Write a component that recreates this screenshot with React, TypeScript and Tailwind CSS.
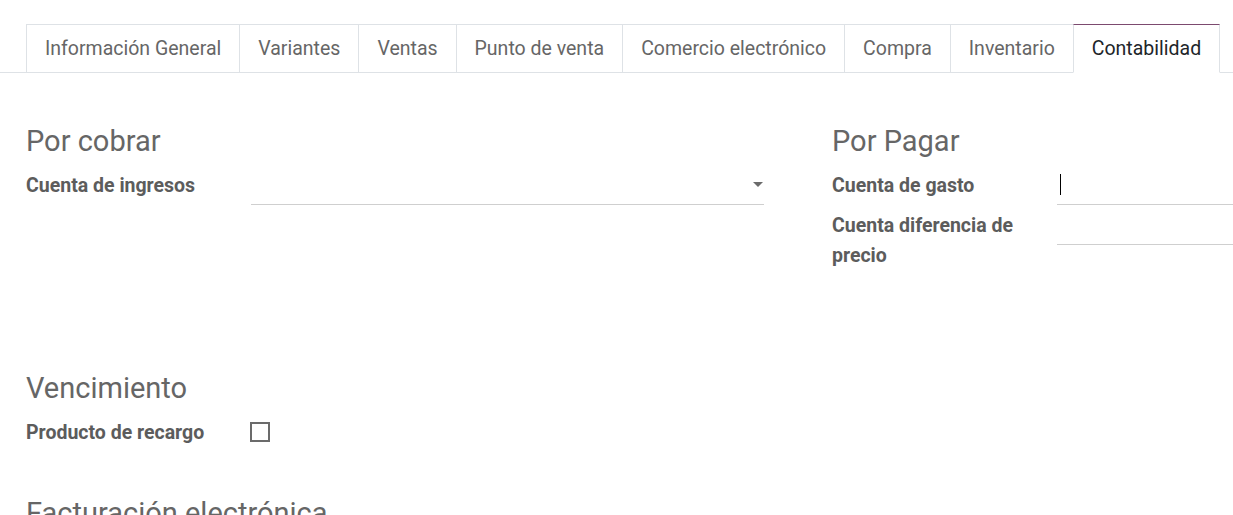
const tabs = [
  "Información General",
  "Variantes",
  "Ventas",
  "Punto de venta",
  "Comercio electrónico",
  "Compra",
  "Inventario",
  "Contabilidad",
];

const labelCls =
  "w-[225px] shrink-0 pt-[6px] pr-4 text-[19.5px] font-bold leading-[29.5px] text-[#5c5c5c]";
const headCls = "mb-[7px] text-[29px] leading-[34px] text-[#666666]";

function FieldRow({ label, children }: { label: string; children?: React.ReactNode }) {
  return (
    <div className="flex">
      <div className={labelCls}>{label}</div>
      <div className="flex h-[40px] flex-1 items-center self-start">{children}</div>
    </div>
  );
}

function Many2One({ caret, cursor }: { caret?: boolean; cursor?: boolean }) {
  return (
    <div className="relative flex h-[40px] w-full items-center border-b border-[#cfcfcf]">
      {cursor && <span className="ml-[3px] h-[21px] w-px bg-black" />}
      {caret && (
        <span className="absolute right-[1px] top-[17px] h-0 w-0 border-x-[5px] border-t-[5px] border-x-transparent border-t-[#6b6b6b]" />
      )}
    </div>
  );
}

export default function App() {
  return (
    <div
      className="h-[515px] w-[1233px] overflow-hidden bg-white text-[#666666]"
      style={{ fontFamily: "Roboto, 'Liberation Sans', sans-serif" }}
    >
      {/* tabs */}
      <ul className="flex border-b border-[#dee2e6] pl-[26px] pt-[24px]">
        {tabs.map((t, i) => {
          const active = t === "Contabilidad";
          return (
            <li
              key={t}
              className={
                "-mb-px flex h-[49px] items-center whitespace-nowrap border-l border-t px-[18px] text-[19.5px] " +
                (i === tabs.length - 1 ? "border-r " : "") +
                (active
                  ? "border-b border-b-white border-l-[#dee2e6] border-r-[#dee2e6] border-t-[#7c4a6f] bg-white text-[#212529]"
                  : "border-b border-[#dee2e6] text-[#666666]")
              }
            >
              {t}
            </li>
          );
        })}
      </ul>

      <div className="w-[1700px] pl-[26px]">
        <div className="mt-[51px] grid grid-cols-[738px_738px] gap-x-[68px]">
          <div>
            <h2 className={headCls}>Por cobrar</h2>
            <FieldRow label="Cuenta de ingresos">
              <Many2One caret />
            </FieldRow>
          </div>
          <div>
            <h2 className={headCls}>Por Pagar</h2>
            <FieldRow label="Cuenta de gasto">
              <Many2One cursor />
            </FieldRow>
            <FieldRow label="Cuenta diferencia de precio">
              <Many2One />
            </FieldRow>
          </div>
        </div>

        <div className="mt-[101px] w-[738px]">
          <h2 className={headCls}>Vencimiento</h2>
          <FieldRow label="Producto de recargo">
            <span className="ml-[-1px] h-[20px] w-[20px] border-2 border-[#6b6b6b] bg-white" />
          </FieldRow>
        </div>

        <div className="mt-[44px] w-[738px]">
          <h2 className="whitespace-nowrap text-[29px] leading-[34px] text-[#666666]">
            Facturación electrónica
          </h2>
        </div>
      </div>
    </div>
  );
}
